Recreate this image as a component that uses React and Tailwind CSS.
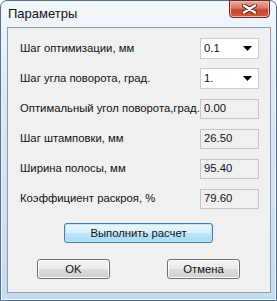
import React from 'react';

const rows = [
  { label: 'Шаг оптимизации, мм', value: '0.1', combo: true },
  { label: 'Шаг угла поворота, град.', value: '1.', combo: true },
  { label: 'Оптимальный угол поворота,град.', value: '0.00' },
  { label: 'Шаг штамповки, мм', value: '26.50' },
  { label: 'Ширина полосы, мм', value: '95.40' },
  { label: 'Коэффициент раскроя, %', value: '79.60' },
];

function Field({ value, combo }) {
  if (combo) {
    return (
      <div className="w-[59px] h-[21px] bg-white border border-[#c9ccd1] flex items-center justify-between pl-[3px] pr-[6px]">
        <span>{value}</span>
        <svg width="9" height="5" viewBox="0 0 9 5">
          <path d="M0 0h9L4.5 5z" fill="#000" />
        </svg>
      </div>
    );
  }
  return (
    <div className="w-[59px] h-[20px] bg-[#f0f0f0] border border-[#c4c6c9] flex items-center pl-[3px]">
      {value}
    </div>
  );
}

function Button({ children, primary, className = '' }) {
  const look = primary
    ? 'border-[#3c7fb1] bg-[linear-gradient(to_bottom,#eaf6fd_0%,#d9f0fc_50%,#bee6fd_50%,#a7d9f5_100%)] shadow-[inset_0_0_0_1px_#c4e5f6]'
    : 'border-[#707070] bg-[linear-gradient(to_bottom,#f2f2f2_0%,#ebebeb_50%,#dddddd_50%,#cfcfcf_100%)] shadow-[inset_0_0_0_1px_#fcfcfc]';
  return (
    <div className={`h-[20px] rounded-[3px] border flex items-center justify-center ${look} ${className}`}>
      {children}
    </div>
  );
}

export default function App() {
  return (
    <div className="w-[277px] h-[301px] bg-white">
      <div
        className="relative w-[277px] h-[301px] rounded-t-[7px] border border-[#55708f] bg-[linear-gradient(to_bottom,#f4f8fc_0%,#dce9f6_30%,#c6dbf1_100%)] shadow-[inset_0_0_0_1px_#eef6fd]"
        style={{ fontFamily: '"Liberation Sans", Arial, sans-serif' }}
      >
        {/* title bar */}
        <div className="h-[26px] flex items-center pl-[7px] text-[13px] text-[#111]">Параметры</div>

        {/* close button */}
        <div className="absolute top-[-1px] right-[6px] w-[41px] h-[18px] rounded-b-[4px] border border-[#6d2a25] bg-[linear-gradient(to_bottom,#e9a99f_0%,#d8765f_45%,#c4452c_55%,#d0583d_100%)] shadow-[inset_0_0_0_1px_#f0b8ae] flex items-center justify-center">
          <svg width="15" height="10" viewBox="0 0 15 10">
            <path d="M2 1.5l11 7M13 1.5l-11 7" stroke="#4a1d18" strokeWidth="4.2" strokeLinecap="round" />
            <path d="M2 1.5l11 7M13 1.5l-11 7" stroke="#fff" strokeWidth="2.6" strokeLinecap="round" />
          </svg>
        </div>

        {/* client area */}
        <div className="ml-[6px] w-[264px] h-[266px] border border-[#8e9cad] bg-[#f0f0f0] text-[11.3px] text-[#111] pt-[10px]">
          <div className="flex flex-col gap-[9px]">
            {rows.map((r) => (
              <div key={r.label} className="flex items-center h-[21px] pl-[12px] pr-[11px] justify-between">
                <span className="whitespace-nowrap">{r.label}</span>
                <Field value={r.value} combo={r.combo} />
              </div>
            ))}
          </div>
          <div className="mt-[14px] pl-[56px]">
            <Button primary className="w-[149px]">Выполнить расчет</Button>
          </div>
          <div className="mt-[16px] flex pl-[29px] gap-[57px]">
            <Button className="w-[73px]">OK</Button>
            <Button className="w-[73px]">Отмена</Button>
          </div>
        </div>
      </div>
    </div>
  );
}
